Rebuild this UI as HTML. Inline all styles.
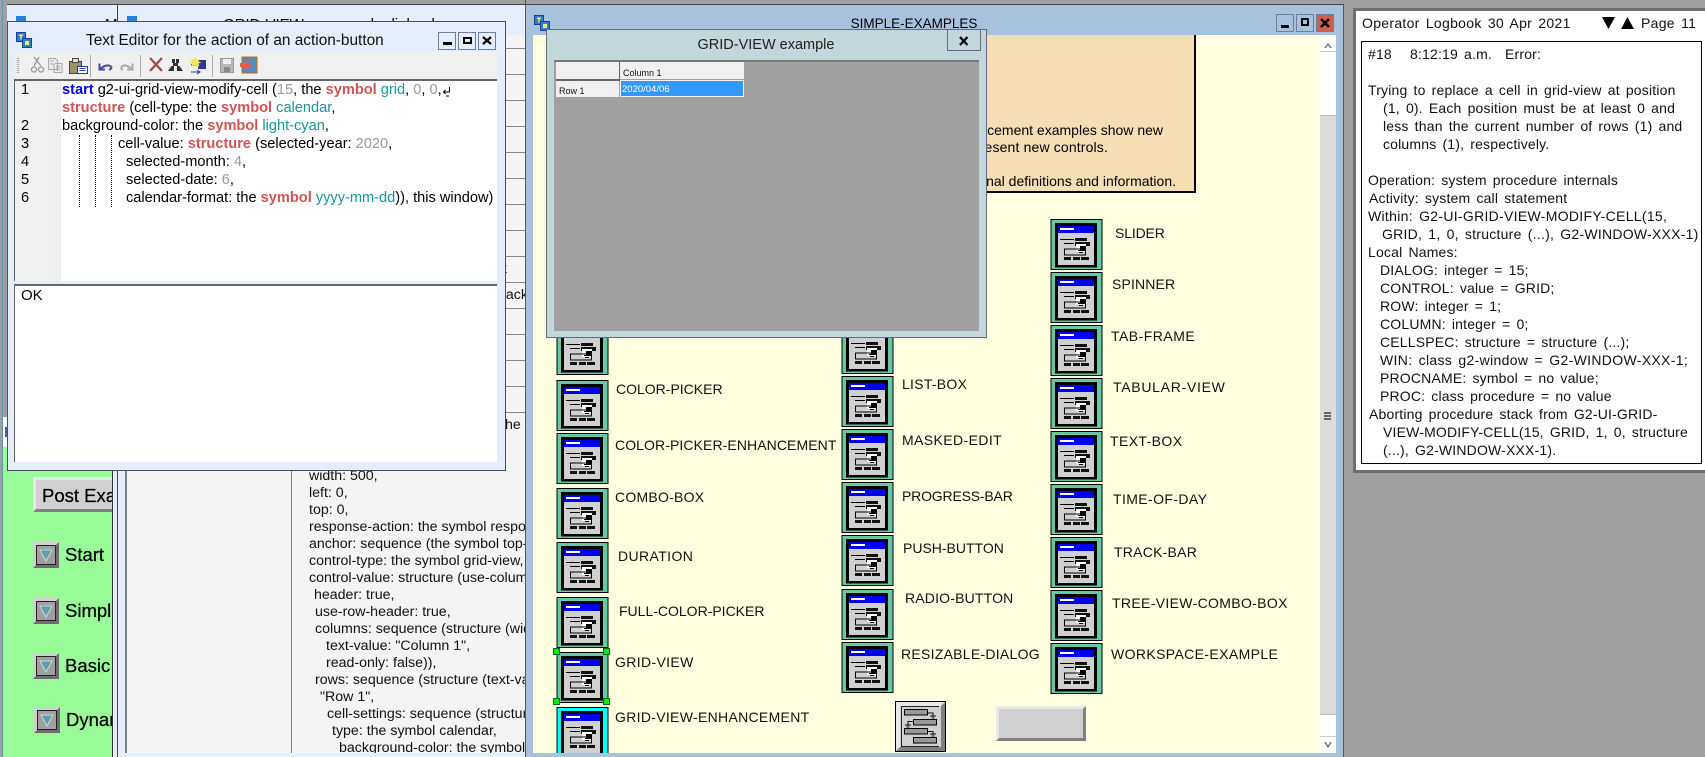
<!DOCTYPE html>
<html><head><meta charset="utf-8"><style>
html,body{margin:0;padding:0;width:1705px;height:757px;overflow:hidden;background:#a0a0a0}
body{position:relative;font-family:"Liberation Sans",sans-serif;color:#000}
.b{position:absolute}
.t{position:absolute;white-space:nowrap;line-height:18px}
.l{position:absolute;white-space:nowrap;font-size:14px;line-height:18px;color:#111}
.i{position:absolute;width:53px;height:53px}
.c{font-size:14.6px;color:#000}
.k{color:#d05555;font-weight:bold}
.v{color:#1a9595}
.n{color:#999}
.d{font-size:14.2px;color:#111}
.g{font-size:14px;letter-spacing:.18px;word-spacing:2px;color:#111}
.sb{position:absolute;background:#a0a0a0;box-sizing:border-box;border-top:3px solid #d0d0d0;border-left:3px solid #d0d0d0;border-right:3px solid #6e6e6e;border-bottom:3px solid #6e6e6e;box-shadow:0 0 0 1px #222 inset}
.rl{position:absolute;left:505px;width:20px;height:1px;background:#888}
.wb{position:absolute;box-sizing:border-box;border:1px solid #6c7f9f;background:#e6eefc}
.h{position:absolute;width:7px;height:7px;background:#00f000;border:1px solid #063;box-sizing:border-box}
.p{font-size:18.5px;line-height:22px;-webkit-text-stroke:.25px #000}
</style></head><body>
<svg width="0" height="0" style="position:absolute"><defs>
<symbol id="ic" viewBox="0 0 53 53">
<rect x="0.500" y="1" width="52" height="51" fill="#000"/><rect x="1.500" y="2" width="50" height="49" fill="#66c9a4"/>
<rect x="5" y="5" width="42" height="44.500" fill="#000"/><rect x="8" y="8" width="36" height="39" fill="#d0d0d0"/>
<rect x="8" y="8" width="36" height="7" fill="#0000f0"/><rect x="10" y="10" width="14" height="2" fill="#fff"/>
<rect x="10" y="21" width="14" height="1" fill="#000"/><rect x="25" y="20" width="12" height="3" fill="#111"/>
<rect x="14" y="25" width="10" height="1" fill="#000"/><rect x="25" y="24" width="15" height="4" fill="#111"/>
<rect x="26" y="26" width="10" height="8" fill="#fff"/><rect x="30" y="28" width="6" height="5" fill="#000"/>
<rect x="14.500" y="31" width="21" height="6" fill="none" stroke="#000"/>
<rect x="28" y="32" width="1" height="1" fill="#000"/><rect x="29" y="32" width="4" height="1" fill="#000"/><rect x="29" y="34" width="4" height="1" fill="#000"/>
<rect x="14" y="39" width="7" height="3" fill="#111"/><rect x="23" y="39" width="7" height="3" fill="#111"/><rect x="31" y="39" width="8" height="3" fill="#111"/>
</symbol>
<symbol id="ic2" viewBox="0 0 53 53">
<rect x="0.500" y="1" width="52" height="51" fill="#000"/><rect x="1.500" y="2" width="50" height="49" fill="#00ffff"/>
<rect x="5" y="5" width="42" height="44.500" fill="#000"/><rect x="8" y="8" width="36" height="39" fill="#d0d0d0"/>
<rect x="8" y="8" width="36" height="7" fill="#0000f0"/><rect x="10" y="10" width="14" height="2" fill="#fff"/>
<rect x="10" y="21" width="14" height="1" fill="#000"/><rect x="25" y="20" width="12" height="3" fill="#111"/>
<rect x="14" y="25" width="10" height="1" fill="#000"/><rect x="25" y="24" width="15" height="4" fill="#111"/>
<rect x="26" y="26" width="10" height="8" fill="#fff"/><rect x="30" y="28" width="6" height="5" fill="#000"/>
<rect x="14.500" y="31" width="21" height="6" fill="none" stroke="#000"/>
<rect x="29" y="32" width="4" height="1" fill="#000"/><rect x="29" y="34" width="4" height="1" fill="#000"/>
<rect x="14" y="39" width="7" height="3" fill="#111"/><rect x="23" y="39" width="7" height="3" fill="#111"/><rect x="31" y="39" width="8" height="3" fill="#111"/>
</symbol>
<symbol id="tw" viewBox="0 0 16 16">
<rect x="0.500" y="0.500" width="9" height="9" fill="#2a7fd8" stroke="#1c3f8c"/><rect x="3" y="2.500" width="4" height="1.500" fill="#ffe860"/><rect x="4.300" y="2.500" width="1.500" height="5" fill="#ffe860"/>
<rect x="6.500" y="6.500" width="9" height="9" fill="#2a7fd8" stroke="#1c3f8c"/><rect x="9" y="9" width="4" height="4" fill="#ffe860"/>
</symbol>
</defs></svg>

<!-- left strip -->
<div class="b" style="left:2px;top:0;width:1px;height:757px;background:#5a9aa8"></div>
<div class="b" style="left:3px;top:417px;width:109px;height:30px;background:#fff"></div>
<div class="b" style="left:5px;top:427px;width:2px;height:10px;background:#4a5aa0"></div>
<!-- windows behind -->
<div class="b" style="left:7px;top:4px;width:518px;height:1px;background:#444"></div>
<div class="b" style="left:7px;top:5px;width:518px;height:30px;background:#e6eefc"></div>
<div class="b" style="left:117px;top:5px;width:1px;height:17px;background:#444"></div>
<div class="b" style="left:16px;top:16px;width:10px;height:6px;background:#2a7fd8"></div>
<div class="b" style="left:127px;top:16px;width:10px;height:6px;background:#2a7fd8"></div>
<div class="t" style="left:105px;top:16px;font-size:15px">M</div>
<div class="t" style="left:223px;top:16px;font-size:15px">GRID-VIEW</div>
<div class="t" style="left:334px;top:16px;font-size:15px">sample dialog-box</div>
<div class="b" style="left:505px;top:35px;width:20px;height:400px;background:#f4f4f4"></div>
<div class="rl" style="top:48px"></div><div class="rl" style="top:74px"></div><div class="rl" style="top:100px"></div><div class="rl" style="top:126px"></div><div class="rl" style="top:152px"></div><div class="rl" style="top:178px"></div><div class="rl" style="top:204px"></div><div class="rl" style="top:230px"></div><div class="rl" style="top:256px"></div><div class="rl" style="top:282px"></div><div class="rl" style="top:308px"></div><div class="rl" style="top:334px"></div><div class="rl" style="top:360px"></div><div class="rl" style="top:386px"></div>
<div class="t d" style="left:500px;top:260px">k</div>
<div class="t d" style="left:498px;top:286px;width:27px;overflow:hidden">back</div>

<!-- green panel -->
<div class="b" style="left:3px;top:447px;width:109px;height:310px;background:#98fb98;overflow:hidden">
  <div class="b" style="left:30px;top:30px;width:100px;height:35px;box-sizing:border-box;background:#d0d0d0;border-top:3px solid #e8e8e8;border-left:3px solid #e8e8e8;border-bottom:3px solid #808080"></div>
  <div class="t p" style="left:39px;top:37px;line-height:24px">Post Example</div>
  <div class="sb" style="left:30px;top:95px;width:26px;height:26px"></div>
  <svg class="b" style="left:36px;top:101px" width="14" height="14"><path d="M1 2H13L7 13Z" fill="#5f9ea8" stroke="#c8d8d8" stroke-width="1"/></svg>
  <div class="t p" style="left:62px;top:97px">Start</div>
  <div class="sb" style="left:30px;top:151px;width:26px;height:26px"></div>
  <svg class="b" style="left:36px;top:157px" width="14" height="14"><path d="M1 2H13L7 13Z" fill="#5f9ea8" stroke="#c8d8d8" stroke-width="1"/></svg>
  <div class="t p" style="left:62px;top:153px">Simple</div>
  <div class="sb" style="left:30px;top:206px;width:26px;height:26px"></div>
  <svg class="b" style="left:36px;top:212px" width="14" height="14"><path d="M1 2H13L7 13Z" fill="#5f9ea8" stroke="#c8d8d8" stroke-width="1"/></svg>
  <div class="t p" style="left:62px;top:208px">Basic</div>
  <div class="sb" style="left:31px;top:260px;width:26px;height:26px"></div>
  <svg class="b" style="left:37px;top:266px" width="14" height="14"><path d="M1 2H13L7 13Z" fill="#5f9ea8" stroke="#c8d8d8" stroke-width="1"/></svg>
  <div class="t p" style="left:63px;top:262px">Dynamic</div>
</div>
<div class="b" style="left:112px;top:417px;width:1px;height:340px;background:#333"></div>
<div class="b" style="left:113px;top:417px;width:412px;height:340px;background:#e6eefc"></div>
<div class="b" style="left:117px;top:417px;width:1px;height:340px;background:#444"></div>
<div class="b" style="left:125px;top:417px;width:2px;height:336px;background:#808080"></div>
<div class="b" style="left:127px;top:412px;width:398px;height:341px;background:#f4f4f4;overflow:hidden">
  <div class="b" style="left:164px;top:0;width:1px;height:341px;background:#808080"></div>
  <div class="t d" style="left:374px;top:4px">the</div>
  <div class="t d" style="left:182px;top:55px">width: 500,</div>
  <div class="t d" style="left:182px;top:72px">left: 0,</div>
  <div class="t d" style="left:182px;top:89px">top: 0,</div>
  <div class="t d" style="left:182px;top:106px">response-action: the symbol response-action,</div>
  <div class="t d" style="left:182px;top:123px">anchor: sequence (the symbol top-left),</div>
  <div class="t d" style="left:182px;top:140px">control-type: the symbol grid-view,</div>
  <div class="t d" style="left:182px;top:157px">control-value: structure (use-column-</div>
  <div class="t d" style="left:187px;top:174px">header: true,</div>
  <div class="t d" style="left:188px;top:191px">use-row-header: true,</div>
  <div class="t d" style="left:188px;top:208px">columns: sequence (structure (width: 100,</div>
  <div class="t d" style="left:199px;top:225px">text-value: "Column 1",</div>
  <div class="t d" style="left:199px;top:242px">read-only: false)),</div>
  <div class="t d" style="left:188px;top:259px">rows: sequence (structure (text-value:</div>
  <div class="t d" style="left:193px;top:276px">"Row 1",</div>
  <div class="t d" style="left:200px;top:293px">cell-settings: sequence (structure (</div>
  <div class="t d" style="left:205px;top:310px">type: the symbol calendar,</div>
  <div class="t d" style="left:212px;top:327px">background-color: the symbol</div>
</div>
<div class="rl" style="top:412px"></div>
<div class="b" style="left:525px;top:0;width:1px;height:757px;background:#555"></div>

<!-- SIMPLE-EXAMPLES -->
<div class="b" style="left:526px;top:4px;width:818px;height:753px;background:#a8c2de;border-top:1px solid #444;border-right:1px solid #555;box-sizing:border-box"></div>
<svg class="b" style="left:534px;top:15px" width="16" height="16"><use href="#tw"/></svg>
<div class="t" style="left:784px;top:15px;width:260px;text-align:center;font-size:13.5px">SIMPLE-EXAMPLES</div>
<div class="wb" style="left:1276px;top:14px;width:18px;height:18px;background:#a8c2de"><div class="b" style="left:4px;top:10px;width:8px;height:3px;background:#000"></div></div>
<div class="wb" style="left:1296px;top:14px;width:18px;height:18px;background:#a8c2de"><div class="b" style="left:4px;top:3px;width:8px;height:8px;border:2px solid #000;box-sizing:border-box"></div></div>
<div class="wb" style="left:1316px;top:14px;width:18px;height:18px;background:#d0604c"><svg width="16" height="16" style="position:absolute;left:0;top:0"><path d="M4 4L12 12M12 4L4 12" stroke="#000" stroke-width="2.500"/></svg></div>
<div class="b" style="left:533px;top:35px;width:787px;height:718px;background:#ffffe0"></div>
<!-- scrollbar -->
<div class="b" style="left:1320px;top:35px;width:16px;height:718px;background:#fff"></div>
<div class="b" style="left:1320px;top:115px;width:16px;height:600px;background:#dcdcdc;border-top:1px solid #bbb;border-bottom:1px solid #bbb;box-sizing:border-box"></div>
<div class="b" style="left:1320px;top:51px;width:16px;height:1px;background:#ccc"></div>
<div class="b" style="left:1320px;top:736px;width:16px;height:1px;background:#ccc"></div>
<svg class="b" style="left:1320px;top:38px" width="16" height="14"><path d="M5 10L8 6L11 10" fill="none" stroke="#666" stroke-width="1.300"/></svg>
<svg class="b" style="left:1320px;top:738px" width="16" height="14"><path d="M5 4L8 9L11 4" fill="none" stroke="#666" stroke-width="1.300"/></svg>
<div class="b" style="left:1324px;top:412px;width:7px;height:2px;background:#666"></div><div class="b" style="left:1324px;top:415px;width:7px;height:2px;background:#666"></div><div class="b" style="left:1324px;top:418px;width:7px;height:2px;background:#666"></div>
<!-- peach -->
<div class="b" style="left:600px;top:35px;width:596px;height:158px;background:#f5deb3;border-right:2px solid #000;border-bottom:2px solid #000;box-sizing:border-box"></div>
<div class="t" style="right:542px;top:121px;font-size:14px">enhancement examples show new</div>
<div class="t" style="right:597px;top:138px;font-size:14px;letter-spacing:.15px">present new controls.</div>
<div class="t" style="right:529px;top:172px;font-size:14px">additional definitions and information.</div>

<!-- icons col1 -->
<svg class="i" style="left:556px;top:323px"><use href="#ic"/></svg>
<svg class="i" style="left:556px;top:379px"><use href="#ic"/></svg>
<svg class="i" style="left:556px;top:432px"><use href="#ic"/></svg>
<svg class="i" style="left:556px;top:487px"><use href="#ic"/></svg>
<svg class="i" style="left:556px;top:541px"><use href="#ic"/></svg>
<svg class="i" style="left:556px;top:596px"><use href="#ic"/></svg>
<svg class="i" style="left:556px;top:651px"><use href="#ic"/></svg>
<div class="b" style="left:556px;top:706px;width:53px;height:47px;overflow:hidden"><svg class="i" style="left:0;top:0"><use href="#ic2"/></svg></div>
<div class="h" style="left:553px;top:648px"></div>
<div class="h" style="left:603px;top:648px"></div>
<div class="h" style="left:553px;top:698px"></div>
<div class="h" style="left:603px;top:698px"></div>
<!-- col2 -->
<svg class="i" style="left:841px;top:322px"><use href="#ic"/></svg>
<svg class="i" style="left:841px;top:375px"><use href="#ic"/></svg>
<svg class="i" style="left:841px;top:428px"><use href="#ic"/></svg>
<svg class="i" style="left:841px;top:481px"><use href="#ic"/></svg>
<svg class="i" style="left:841px;top:534px"><use href="#ic"/></svg>
<svg class="i" style="left:841px;top:588px"><use href="#ic"/></svg>
<svg class="i" style="left:841px;top:641px"><use href="#ic"/></svg>
<!-- col3 -->
<svg class="i" style="left:1050px;top:218px"><use href="#ic"/></svg>
<svg class="i" style="left:1050px;top:271px"><use href="#ic"/></svg>
<svg class="i" style="left:1050px;top:324px"><use href="#ic"/></svg>
<svg class="i" style="left:1050px;top:377px"><use href="#ic"/></svg>
<svg class="i" style="left:1050px;top:430px"><use href="#ic"/></svg>
<svg class="i" style="left:1050px;top:483px"><use href="#ic"/></svg>
<svg class="i" style="left:1050px;top:536px"><use href="#ic"/></svg>
<svg class="i" style="left:1050px;top:589px"><use href="#ic"/></svg>
<svg class="i" style="left:1050px;top:642px"><use href="#ic"/></svg>
<!-- labels -->
<div class="l" style="left:616px;top:380px">COLOR-PICKER</div>
<div class="l" style="left:615px;top:436px;letter-spacing:.09px">COLOR-PICKER-ENHANCEMENT</div>
<div class="l" style="left:615px;top:488px;letter-spacing:.24px">COMBO-BOX</div>
<div class="l" style="left:618px;top:547px;letter-spacing:.4px">DURATION</div>
<div class="l" style="left:619px;top:602px">FULL-COLOR-PICKER</div>
<div class="l" style="left:615px;top:653px;letter-spacing:.36px">GRID-VIEW</div>
<div class="l" style="left:615px;top:708px;letter-spacing:.31px">GRID-VIEW-ENHANCEMENT</div>
<div class="l" style="left:902px;top:375px;letter-spacing:.27px">LIST-BOX</div>
<div class="l" style="left:902px;top:431px;letter-spacing:.4px">MASKED-EDIT</div>
<div class="l" style="left:902px;top:487px;letter-spacing:-.18px">PROGRESS-BAR</div>
<div class="l" style="left:903px;top:539px">PUSH-BUTTON</div>
<div class="l" style="left:905px;top:589px;letter-spacing:.18px">RADIO-BUTTON</div>
<div class="l" style="left:901px;top:645px;letter-spacing:.27px">RESIZABLE-DIALOG</div>
<div class="l" style="left:1115px;top:224px;letter-spacing:-.15px">SLIDER</div>
<div class="l" style="left:1112px;top:275px;letter-spacing:.15px">SPINNER</div>
<div class="l" style="left:1111px;top:327px;letter-spacing:.48px">TAB-FRAME</div>
<div class="l" style="left:1113px;top:378px;letter-spacing:.72px">TABULAR-VIEW</div>
<div class="l" style="left:1110px;top:432px;letter-spacing:.4px">TEXT-BOX</div>
<div class="l" style="left:1113px;top:490px;letter-spacing:.4px">TIME-OF-DAY</div>
<div class="l" style="left:1114px;top:543px;letter-spacing:.24px">TRACK-BAR</div>
<div class="l" style="left:1112px;top:594px;letter-spacing:.34px">TREE-VIEW-COMBO-BOX</div>
<div class="l" style="left:1111px;top:645px;letter-spacing:.38px">WORKSPACE-EXAMPLE</div>
<!-- flow icon -->
<svg class="b" style="left:895px;top:701px" width="51" height="51">
<rect width="51" height="51" fill="#000"/><rect x="1" y="1" width="49" height="49" fill="#d0d0d0"/>
<path d="M1 1H50L46 5H5V46L1 50Z" fill="#e8e8e8"/><path d="M50 1V50H1L5 46H46V5Z" fill="#808080"/>
<path d="M6.500 5.500V45.500H44M6.500 5.500H44" fill="none" stroke="#222"/>
<rect x="9.500" y="8.500" width="23" height="5.500" fill="#999" stroke="#000"/><rect x="18.500" y="18.500" width="23" height="5.500" fill="#999" stroke="#000"/><rect x="9.500" y="27.500" width="23" height="5.500" fill="#999" stroke="#000"/><rect x="18.500" y="36.500" width="23" height="5.500" fill="#999" stroke="#000"/>
<path d="M33 12H38V16M35 15H41M36.500 17H39.500M18 20.500H13V25M10 24H16M11.500 26H14.500M33 30.500H38V34M35 33H41M36.500 35H39.500" fill="none" stroke="#111"/>
</svg>
<div class="b" style="left:996px;top:706px;width:90px;height:35px;box-sizing:border-box;background:#d0d0d0;border-top:3px solid #e8e8e8;border-left:3px solid #e8e8e8;border-right:3px solid #808080;border-bottom:3px solid #808080"></div>

<!-- GRID-VIEW dialog -->
<div class="b" style="left:546px;top:29px;width:441px;height:309px;box-sizing:border-box;background:#c2d6dc;border:1px solid #5e6e7a"></div>
<div class="t" style="left:546px;top:36px;width:440px;text-align:center;font-size:14.5px;color:#222">GRID-VIEW example</div>
<div class="b" style="left:947px;top:29px;width:34px;height:22px;box-sizing:border-box;border:1px solid #5e6e7a"></div>
<svg class="b" style="left:947px;top:30px" width="34" height="21"><path d="M13 7L20.500 15M20.500 7L13 15" stroke="#000" stroke-width="2.200"/></svg>
<div class="b" style="left:554px;top:60px;width:425px;height:271px;background:#a0a0a0;border-top:2px solid #777;box-sizing:border-box"></div>
<div class="b" style="left:556px;top:62px;width:63px;height:17px;background:#f0f0f0"></div>
<div class="b" style="left:620px;top:62px;width:124px;height:17px;background:#f0f0f0"></div>
<div class="b" style="left:556px;top:79px;width:63px;height:2px;background:#666"></div>
<div class="b" style="left:619px;top:62px;width:1px;height:19px;background:#666"></div>
<div class="b" style="left:556px;top:81px;width:63px;height:16px;background:#f0f0f0"></div>
<div class="b" style="left:620px;top:80px;width:124px;height:17px;background:#3399ff;border:1px solid #f4f4f4;box-sizing:border-box"></div>
<div class="t" style="left:623px;top:65px;font-size:9px;line-height:16px;color:#111">Column 1</div>
<div class="t" style="left:559px;top:83px;font-size:9px;line-height:16px;color:#111">Row 1</div>
<div class="t" style="left:622px;top:82px;font-size:9.5px;line-height:16px;color:#fff">2020/04/06</div>

<!-- Text editor -->
<div class="b" style="left:7px;top:21px;width:499px;height:450px;box-sizing:border-box;background:#e6eefc;border:1px solid #4a4f5a"></div>
<svg class="b" style="left:16px;top:32px" width="16" height="16"><use href="#tw"/></svg>
<div class="t" style="left:86px;top:32px;font-size:15.4px;color:#111">Text Editor for the action of an action-button</div>
<div class="wb" style="left:438px;top:32px;width:18px;height:18px"><div class="b" style="left:4px;top:9px;width:9px;height:3px;background:#000"></div></div>
<div class="wb" style="left:458px;top:32px;width:18px;height:18px"><div class="b" style="left:4px;top:4px;width:9px;height:7px;border:2px solid #000;box-sizing:border-box"></div></div>
<div class="wb" style="left:478px;top:32px;width:18px;height:18px"><svg width="16" height="16" style="position:absolute;left:0;top:0"><path d="M4 4L12 11M12 4L4 11" stroke="#000" stroke-width="2.200"/></svg></div>
<div class="b" style="left:14px;top:52px;width:484px;height:27px;background:#f0f0f0"></div>
<svg class="b" style="left:14px;top:52px" width="250" height="27">
<path d="M4 6v15" stroke="#aaa" stroke-width="2.500" stroke-dasharray="1 1"/>
<path d="M20 5L27 14M25 5L20 14" stroke="#999" stroke-width="1.300" fill="none"/><circle cx="20" cy="17.500" r="2.500" fill="none" stroke="#999" stroke-width="1.300"/><circle cx="27" cy="17.500" r="2.500" fill="none" stroke="#999" stroke-width="1.300"/>
<path d="M34.500 6.500h7l2 2v9h-9zM41 11.500h7v9h-8v-9" fill="#eee" stroke="#aaa"/><path d="M36 9h4M36 12h4M42 14h4M42 16h4M42 18h4" stroke="#aaa"/>
<rect x="55.500" y="9.500" width="12" height="12" fill="#9a9468" stroke="#444"/><rect x="58.500" y="6.500" width="6" height="4" fill="#eee8b8" stroke="#444"/><rect x="63.500" y="14.500" width="10" height="7" fill="#fff" stroke="#2b3c86"/><path d="M65.500 16.500h6M65.500 18.500h6" stroke="#2b3c86"/>
<rect x="76" y="3" width="1" height="22" fill="#aaa"/>
<path d="M86 17.500C89 14 94 12 97 14.500C98 15.500 97 17.500 95 17.500M85.500 11.500V17.500H91" fill="none" stroke="#3f4fa0" stroke-width="2"/>
<path d="M118 17.500C115 14 110 12 108 14.500C107 15.500 107 17.500 109 17.500M118.500 11.500V17.500H113" fill="none" stroke="#aaa" stroke-width="2"/>
<rect x="126" y="3" width="1" height="22" fill="#aaa"/>
<path d="M136 6L148 19M148 6L136 19" stroke="#a04848" stroke-width="2.200"/>
<path d="M158 7h3v4h1v-4h3v4h-1v3h1.500l3.500 5h-6v-5h-3v5h-6l3.500-5h1.500v-3h-1z" fill="#333"/>
<path d="M177 12h4v-4h11v9h-8v-3h-7z" fill="#2c3a8c"/><path d="M181 5l1.500 3 3-1.500-1 3 3 1-3 1 1 3-3-1-1.500 3-1-3-3 1 1-3-3-1 3-1-1-3 3 1z" fill="#f4e458"/><path d="M177 20h8M183 18l3 2-3 2" stroke="#2c3a8c" fill="none"/>
<rect x="198" y="3" width="1" height="22" fill="#aaa"/>
<rect x="206.500" y="6.500" width="13" height="14" fill="#b8b8b8" stroke="#999"/><rect x="209" y="7" width="8" height="5" fill="#eee"/><rect x="210" y="15" width="6" height="5" fill="#888"/>
<rect x="228.500" y="5.500" width="14" height="15" fill="#4a90c8" stroke="#9a7a4a" stroke-width="2"/>
<path d="M226 11h6v-3l6 5-6 5v-3h-6z" fill="#e85c48"/>
</svg>
<div class="b" style="left:14px;top:79px;width:483px;height:202px;background:#fff;border-top:2px solid #666;border-left:1px solid #666;box-sizing:border-box;overflow:hidden">
  <div class="b" style="left:0;top:0;width:35px;height:202px;background:#f0f0f0"></div>
  <div class="b" style="left:35px;top:0;width:11px;height:202px;background:repeating-conic-gradient(#f8f8f8 0 25%,#e6e6e6 0 50%) 0 0/2px 2px"></div>
</div>
<div class="b" style="left:79px;top:135px;width:0;height:72px;border-left:1px dotted #000"></div>
<div class="b" style="left:95px;top:135px;width:0;height:72px;border-left:1px dotted #000"></div>
<div class="b" style="left:111px;top:135px;width:0;height:72px;border-left:1px dotted #000"></div>
<div class="t c" style="left:21px;top:81px">1</div>
<div class="t c" style="left:21px;top:117px">2</div>
<div class="t c" style="left:21px;top:135px">3</div>
<div class="t c" style="left:21px;top:153px">4</div>
<div class="t c" style="left:21px;top:171px">5</div>
<div class="t c" style="left:21px;top:189px">6</div>
<div class="t c" style="left:62px;top:81px"><b style="color:#0000ff">start</b> g2-ui-grid-view-modify-cell (<span class="n">15</span>, the <span class="k">symbol</span> <span class="v">grid</span>, <span class="n">0</span>, <span class="n">0</span>,</div>
<svg class="b" style="left:442px;top:86px" width="9" height="11"><path d="M7.500 1V6H1.500M3.500 4L1.500 6L3.500 8M4 10h3" fill="none" stroke="#000"/></svg>
<div class="t c" style="left:62px;top:99px"><span class="k">structure</span> (cell-type: the <span class="k">symbol</span> <span class="v">calendar</span>,</div>
<div class="t c" style="left:62px;top:117px">background-color: the <span class="k">symbol</span> <span class="v">light-cyan</span>,</div>
<div class="t c" style="left:118px;top:135px">cell-value: <span class="k">structure</span> (selected-year: <span class="n">2020</span>,</div>
<div class="t c" style="left:126px;top:153px">selected-month: <span class="n">4</span>,</div>
<div class="t c" style="left:126px;top:171px">selected-date: <span class="n">6</span>,</div>
<div class="t c" style="left:126px;top:189px">calendar-format: the <span class="k">symbol</span> <span class="v">yyyy-mm-dd</span>)), this window)</div>
<div class="b" style="left:14px;top:284px;width:483px;height:178px;background:#fff;border-top:2px solid #666;border-left:1px solid #666;box-sizing:border-box"></div>
<div class="t c" style="left:21px;top:287px;font-size:15px">OK</div>

<!-- Logbook -->
<div class="b" style="left:1353px;top:8px;width:352px;height:465px;box-sizing:border-box;background:#fff;border:3px solid #6e6e6e;border-right:none"></div>
<div class="b" style="left:1361px;top:41px;width:341px;height:423px;box-sizing:border-box;border:1px solid #000"></div>
<div class="t g" style="left:1362px;top:14px;letter-spacing:.3px">Operator Logbook 30 Apr 2021</div>
<svg class="b" style="left:1601px;top:16px" width="34" height="14"><path d="M1 1H14L7.500 13ZM20 13H33L26.500 1Z" fill="#000"/></svg>
<div class="t g" style="left:1641px;top:14px;letter-spacing:.3px">Page 11</div>
<div class="t g" style="left:1368px;top:45px">#18</div>
<div class="t g" style="left:1410px;top:45px">8:12:19 a.m.</div>
<div class="t g" style="left:1505px;top:45px">Error:</div>
<div class="t g" style="left:1368px;top:81px">Trying to replace a cell in grid-view at position</div>
<div class="t g" style="left:1383px;top:99px">(1, 0). Each position must be at least 0 and</div>
<div class="t g" style="left:1383px;top:117px">less than the current number of rows (1) and</div>
<div class="t g" style="left:1383px;top:135px">columns (1), respectively.</div>
<div class="t g" style="left:1368px;top:171px">Operation: system procedure internals</div>
<div class="t g" style="left:1369px;top:189px">Activity: system call statement</div>
<div class="t g" style="left:1368px;top:207px;letter-spacing:.3px">Within: G2-UI-GRID-VIEW-MODIFY-CELL(15,</div>
<div class="t g" style="left:1382px;top:225px;letter-spacing:.25px">GRID, 1, 0, structure (...), G2-WINDOW-XXX-1)</div>
<div class="t g" style="left:1368px;top:243px">Local Names:</div>
<div class="t g" style="left:1380px;top:261px">DIALOG: integer = 15;</div>
<div class="t g" style="left:1380px;top:279px">CONTROL: value = GRID;</div>
<div class="t g" style="left:1380px;top:297px">ROW: integer = 1;</div>
<div class="t g" style="left:1380px;top:315px">COLUMN: integer = 0;</div>
<div class="t g" style="left:1380px;top:333px">CELLSPEC: structure = structure (...);</div>
<div class="t g" style="left:1380px;top:351px;letter-spacing:.33px">WIN: class g2-window = G2-WINDOW-XXX-1;</div>
<div class="t g" style="left:1380px;top:369px">PROCNAME: symbol = no value;</div>
<div class="t g" style="left:1380px;top:387px">PROC: class procedure = no value</div>
<div class="t g" style="left:1369px;top:405px">Aborting procedure stack from G2-UI-GRID-</div>
<div class="t g" style="left:1383px;top:423px">VIEW-MODIFY-CELL(15, GRID, 1, 0, structure</div>
<div class="t g" style="left:1383px;top:441px">(...), G2-WINDOW-XXX-1).</div>
</body></html>
